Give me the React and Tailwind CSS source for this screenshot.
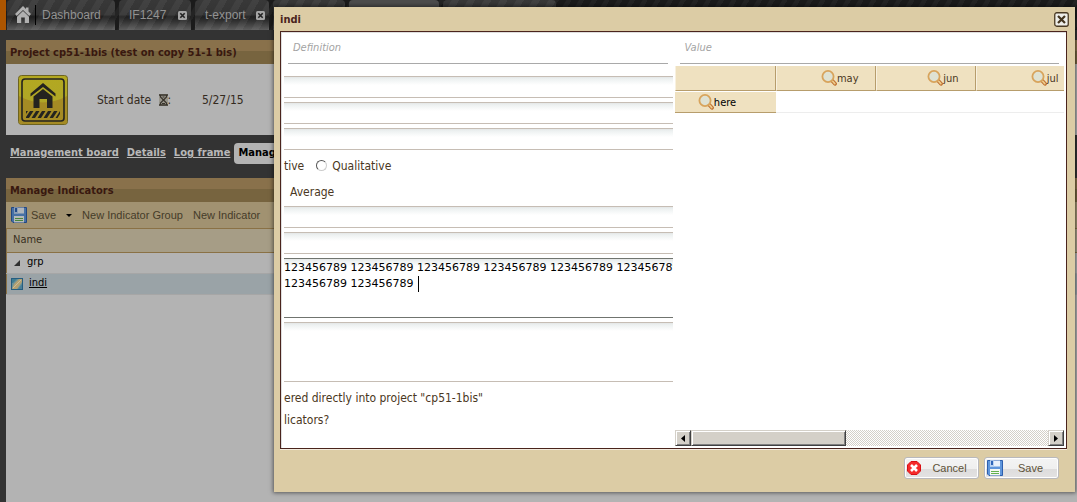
import React from "react";

const headerBg =
  "bg-[#1c1c1c] bg-[repeating-linear-gradient(120deg,#1b1b1b_0px,#1b1b1b_6px,#242424_7px,#242424_11px)]";
const tabBg =
  "bg-[repeating-linear-gradient(120deg,rgba(255,255,255,0)_0px,rgba(255,255,255,0)_7px,rgba(255,255,255,0.05)_8px,rgba(255,255,255,0.05)_14px),linear-gradient(180deg,#383838_0%,#343434_48%,#1f1f1f_56%,#333333_72%,#5c5c5c_100%)]";
const titleBg = "bg-[linear-gradient(180deg,#89714b_0%,#89714b_45%,#77643f_46%,#77643f_100%)]";
const fieldBg = "bg-[linear-gradient(180deg,#e4e6e6_0px,#edf1f1_2px,#ffffff_8px)]";

function HomeIcon() {
  return (
    <svg width="16" height="18" viewBox="0 0 16 18" fill="#b0b0b0" className="shrink-0">
      <path d="M8 0 L0 8 L1.8 10 L8 4 L14.2 10 L16 8 L13.5 5.5 V1.5 H11 V3 Z" />
      <path d="M2 10.8 L8 5 L14 10.8 V17 H9.8 V11.5 H6.2 V17 H2 Z" />
    </svg>
  );
}

function TabClose() {
  return (
    <svg width="9" height="9" viewBox="0 0 9 9">
      <rect width="9" height="9" rx="1.5" fill="#a5a5a5" />
      <path d="M2.3 2.3 L6.7 6.7 M6.7 2.3 L2.3 6.7" stroke="#222" strokeWidth="1.6" />
    </svg>
  );
}

function ProjectIcon() {
  return (
    <svg width="50" height="50" viewBox="0 0 50 50">
      <defs>
        <linearGradient id="sign" x1="0" y1="0" x2="0" y2="1">
          <stop offset="0" stopColor="#b3a820" />
          <stop offset="0.5" stopColor="#b0a726" />
          <stop offset="1" stopColor="#a08a20" />
        </linearGradient>
      </defs>
      <rect x="0.5" y="0.5" width="49" height="49" rx="3" fill="url(#sign)" stroke="#6d6320" />
      <path d="M1 21 Q25 34 49 21 V47 Q49 49 47 49 H3 Q1 49 1 47 Z" fill="#a58b24" />
      <rect x="4" y="4" width="42" height="42" rx="3" fill="none" stroke="#24231f" strokeWidth="1.6" />
      <path d="M25 8 L12.5 18.5 V21.5 L25 12 L37.5 21.5 V18.5 Z" fill="#24231f" />
      <path d="M15.5 21.5 L25 14 L34.5 21.5 V33 H29 V24 H21.5 V33 H15.5 Z" fill="#24231f" />
      <path
        d="M8 36 H10 L8 39 Z M12 36 H15.5 L11 43 H8 V42 Z M18 36 H21.5 L17 43 H13.5 Z M24 36 H27.5 L23 43 H19.5 Z M30 36 H33.5 L29 43 H25.5 Z M36 36 H39.5 L35 43 H31.5 Z M42 36 V39 L39.5 43 H37.5 Z"
        fill="#24231f"
      />
    </svg>
  );
}

function HourglassIcon() {
  return (
    <svg width="9" height="12" viewBox="0 0 9 12" fill="none" stroke="#39342c">
      <rect x="0" y="0" width="9" height="12" fill="#99968c" stroke="none" />
      <path d="M0 1 H9 M0 11 H9" strokeWidth="1.4" />
      <path d="M1.5 1 V3 L7.5 9 V11 M7.5 1 V3 L1.5 9 V11" strokeWidth="1.2" />
      <path d="M3 9.5 H6 M3.5 3 H5.5" />
    </svg>
  );
}

function DiskIcon({ dim }) {
  return (
    <svg width="16" height="16" viewBox="0 0 16 16" className={dim ? "brightness-75" : ""}>
      <path d="M0.5 0.5 H15.5 V15.5 H2 L0.5 14 Z" fill="#5f96dc" stroke="#2d5fae" />
      <rect x="3" y="0.5" width="10" height="6" fill="#e9f1fb" />
      <rect x="3" y="0.5" width="4" height="6" fill="#b9d2f2" />
      <rect x="4" y="1" width="2" height="4" fill="#2f65b8" />
      <rect x="3" y="9" width="10" height="6.5" fill="#f4f8f4" />
      <path d="M4 11.5 H12 M4 13.5 H12" stroke="#63b14e" />
    </svg>
  );
}

function IndicatorIcon() {
  return (
    <svg width="12" height="12" viewBox="0 0 12 12">
      <rect width="12" height="12" fill="#255d80" />
      <rect x="1" y="1" width="10" height="10" fill="#6c9298" />
      <path d="M1 11 L3 6 L8 1 H11 V4 L6 11 Z" fill="#b3a071" />
      <path d="M2 10 L10 2" stroke="#c9bd9a" />
      <path d="M7 11 L11 6 V11 Z" fill="#4a7f96" />
      <path d="M1 1 H6 L2 5 H1 Z" fill="#3f7d92" />
    </svg>
  );
}

function Magnifier() {
  return (
    <svg width="16" height="16" viewBox="0 0 16 16" className="shrink-0">
      <path d="M11 10.5 L14 13.8" stroke="#bf6f2f" strokeWidth="3.8" strokeLinecap="round" />
      <path d="M11.5 11 L13.8 13.6" stroke="#eecb8c" strokeWidth="1.8" strokeLinecap="round" />
      <circle cx="7" cy="6.5" r="5.6" fill="#dfe2d3" stroke="#d8a45c" strokeWidth="1.8" />
    </svg>
  );
}

function CancelIcon() {
  return (
    <svg width="14" height="14" viewBox="0 0 14 14">
      <path d="M4 0.5 H10 L13.5 4 V10 L10 13.5 H4 L0.5 10 V4 Z" fill="#f52b2b" stroke="#d80f14" />
      <path d="M4 4 L10 10 M10 4 L4 10" stroke="#fff" strokeWidth="2.6" />
    </svg>
  );
}

function Tab({ children, className = "" }) {
  return (
    <div className={`flex h-full shrink-0 items-center rounded-t-[4px] font-['Liberation_Sans',sans-serif] text-xs text-[#929292] ${tabBg} ${className}`}>
      {children}
    </div>
  );
}

function Field({ label }) {
  return (
    <input
      aria-label={label}
      className={`block h-[22px] w-full border-y border-[#c6bdb4] outline-none ${fieldBg}`}
    />
  );
}

function HeadCell({ children }) {
  return (
    <th scope="col" className="h-[25px] border-r border-b border-[#b79d6c] border-l border-l-[#f8f1e0] bg-[#efe1c0] p-0 pr-4 font-normal text-[#4a3722]">
      {children && (
        <span className="flex items-center justify-end">
          <Magnifier />
          <span className="pt-0.5">{children}</span>
        </span>
      )}
    </th>
  );
}

function SectionTitle({ children }) {
  return (
    <h3 className="mx-[5px] flex h-[31px] items-center border-b border-[#a9a9a9] px-[5px] pt-px text-[11px] font-normal text-[#a3a3a3] italic">
      {children}
    </h3>
  );
}

const scrollBtn =
  "flex h-4 w-4 shrink-0 items-center justify-center border border-t-[#d4d0c8] border-l-[#d4d0c8] border-r-[#404040] border-b-[#404040] bg-[#d4d0c8] shadow-[inset_1px_1px_0_#fff,inset_-1px_-1px_0_#808080]";
const dialogBtn =
  "flex h-[22px] w-[75px] items-center rounded-[3px] border border-[#b9b9bd] bg-[linear-gradient(180deg,#f4f4f4_0%,#efefef_55%,#dedddd_56%,#e3e2e2_100%)] pl-0.5 font-['Liberation_Sans',sans-serif] text-[11px] text-[#5d5238] shadow-[inset_0_0_0_1px_#fff]";

export default function App() {
  return (
    <div className="relative flex min-h-screen flex-col overflow-hidden bg-[#333333] font-['DejaVu_Sans_Condensed','DejaVu_Sans',sans-serif] text-xs text-[#332a20]">
      <header className={`flex h-[30px] ${headerBg}`}>
        <div className="w-[6px] shrink-0 bg-[#ac5500]" />
        <nav className="flex gap-1 pl-px" aria-label="Open tabs">
          <Tab className="w-[108px] pl-2">
            <HomeIcon />
            <span className="mr-1.5 ml-1 h-5 w-px bg-black" />
            <a href="#dashboard">Dashboard</a>
          </Tab>
          <Tab className="w-[72px] justify-between pr-1 pl-2.5">
            <a href="#if1247">IF1247</a>
            <button type="button" aria-label="Close IF1247"><TabClose /></button>
          </Tab>
          <Tab className="w-[74px] justify-between pr-1 pl-2.5">
            <a href="#t-export">t-export</a>
            <button type="button" aria-label="Close t-export"><TabClose /></button>
          </Tab>
          <Tab className="w-[72px]" />
          <div className="h-full w-[90px] rounded-t-[4px] bg-[#4c4c4c]" />
          <Tab className="w-[113px]" />
        </nav>
      </header>

      <main className="flex grow flex-col pt-2.5 pl-1.5">
        <section>
          <h1 className={`flex h-6 items-center pt-0.5 pl-1 text-[11px] font-bold text-[#39180f] ${titleBg}`}>
            Project cp51-1bis (test on copy 51-1 bis)
          </h1>
          <div className="flex h-[71px] items-center bg-[#b3b3b3] pl-3">
            <ProjectIcon />
            <span className="ml-[29px] flex w-[105px] items-center">
              Start date&nbsp;
              <span className="ml-1"><HourglassIcon /></span>:
            </span>
            <span>5/27/15</span>
          </div>
        </section>

        <nav className="flex h-[43px] items-center pb-1.5 pl-1 text-[11px] font-bold text-[#b8b8b8]" aria-label="Project">
          <a href="#board" className="mr-2 underline">Management board</a>
          <a href="#details" className="mr-2 underline">Details</a>
          <a href="#logframe" className="underline">Log frame</a>
          <a href="#indicators" className="ml-1 flex h-[21px] items-center rounded-[4px] bg-[#b3b3b3] px-1 text-black">Manage</a>
        </nav>

        <section className="flex grow flex-col bg-[#b3b3b3]">
          <h2 className={`flex h-6 items-center pt-0.5 pl-1 text-[11px] font-bold text-[#39180f] ${titleBg}`}>
            Manage Indicators
          </h2>
          <div className="flex h-[27px] items-center border-b border-[#8a7145] bg-[#a19271] pl-[5px] font-['Liberation_Sans',sans-serif] text-[11px] text-[#453c29]">
            <button type="button" className="flex items-center gap-1">
              <DiskIcon dim />
              Save
              <span className="ml-1.5 h-0 w-0 border-x-[3px] border-t-[3px] border-x-transparent border-t-black" />
            </button>
            <button type="button" className="ml-2.5">New Indicator Group</button>
            <button type="button" className="ml-2.5">New Indicator</button>
          </div>
          <table className="w-full border-l border-[#8a7145] text-left text-[11px]">
            <thead>
              <tr className="h-[23px] border-b border-[#8a7145] bg-[#a69d86]">
                <th scope="col" className="pl-1.5 font-normal text-[#39301f]">Name</th>
              </tr>
            </thead>
            <tbody className="text-black">
              <tr className="h-[21px] border-b border-[#a6a6a6]">
                <td>
                  <span className="flex items-center gap-[7px] pl-[7px]">
                    <svg width="6" height="6" viewBox="0 0 6 6"><path d="M6 0 V6 H0 Z" fill="#303030" /></svg>
                    grp
                  </span>
                </td>
              </tr>
              <tr className="h-[21px] border-b border-[#a6a6a6] bg-[#9aa3a7]">
                <td>
                  <span className="flex items-center gap-1.5 pl-1">
                    <IndicatorIcon />
                    <a href="#indi" className="underline">indi</a>
                  </span>
                </td>
              </tr>
            </tbody>
          </table>
        </section>
      </main>

      <div
        role="dialog"
        aria-labelledby="dialog-title"
        className="absolute top-[7px] right-0.5 left-[274px] border border-[#dccca5] bg-[#dccca5] px-[5px] pb-3 shadow-[0_0_4px_1px_rgba(0,0,0,0.5)]"
      >
        <div className="flex h-[23px] items-center justify-between">
          <h2 id="dialog-title" className="pt-0.5 text-[11px] font-bold text-[#4a241d]">indi</h2>
          <button type="button" aria-label="Close">
            <svg width="15" height="15" viewBox="0 0 15 15">
              <rect x="0.75" y="0.75" width="13.5" height="13.5" rx="2" fill="#eeeeea" stroke="#4a3a24" strokeWidth="1.3" />
              <path d="M4 4 L11 11 M11 4 L4 11" stroke="#43341f" strokeWidth="2.2" />
            </svg>
          </button>
        </div>

        <div className="mr-0.5 flex h-[418px] gap-0.5 border border-[#4a241d] bg-white px-0.5 pt-px pb-0.5 shadow-[0_1px_0_#f4ebdd,inset_1px_1px_0_#dedede]">
          <div className="min-w-0 flex-1 overflow-hidden text-[#4a3722]">
            <SectionTitle>Definition</SectionTitle>
            <div className="flex flex-col gap-1 pt-3 pl-px">
              <Field label="Code" />
              <Field label="Name" />
              <Field label="Description" />
              <div className="flex h-[22px] items-center pt-px">
                <span>tive</span>
                <label className="ml-3 flex items-center gap-[5px]">
                  <input
                    type="radio"
                    name="kind"
                    className="h-[11px] w-[11px] appearance-none rounded-full border border-t-[#555] border-l-[#555] border-r-[#ccc] border-b-[#ccc] bg-white"
                  />
                  Qualitative
                </label>
              </div>
              <div className="flex h-[22px] items-center pt-px pl-1.5">Average</div>
              <Field label="Units" />
              <Field label="Objective" />
              <div className="relative">
                <textarea
                  aria-label="Source of verification"
                  wrap="off"
                  className={`block h-[60px] w-full resize-none overflow-hidden border-y border-[#70746f] pt-px font-['DejaVu_Sans',sans-serif] text-[11px] leading-4 whitespace-pre text-black outline-none ${fieldBg}`}
                  defaultValue={
                    "123456789 123456789 123456789 123456789 123456789 123456789\n123456789 123456789 "
                  }
                />
                <span className="absolute top-[18px] left-[134px] h-4 w-px bg-black" />
              </div>
              <textarea
                aria-label="Comments"
                className={`block h-[60px] w-full resize-none border-y border-[#c6bdb4] outline-none ${fieldBg}`}
              />
              <p className="flex h-[22px] items-center pt-px whitespace-nowrap">ered directly into project "cp51-1bis"</p>
              <p>licators?</p>
            </div>
          </div>

          <div className="flex min-w-0 flex-1 flex-col">
            <SectionTitle>Value</SectionTitle>
            <div className="mt-0.5 grow overflow-hidden">
              <table className="w-[401px] table-fixed border-separate border-spacing-0 text-[11px]">
                <colgroup>
                  <col className="w-[101px]" />
                  <col />
                  <col />
                  <col />
                </colgroup>
                <thead>
                  <tr>
                    <HeadCell />
                    <HeadCell>may</HeadCell>
                    <HeadCell>jun</HeadCell>
                    <HeadCell>jul</HeadCell>
                  </tr>
                </thead>
                <tbody>
                  <tr>
                    <th scope="row" className="h-[22px] border-t border-b border-t-white border-b-[#b79d6c] bg-[#efe1c0] p-0 pr-4 font-normal text-black">
                      <span className="flex items-center justify-center">
                        <Magnifier />
                        <span className="pt-0.5">here</span>
                      </span>
                    </th>
                    <td className="border-b border-[#ededed]" />
                    <td className="border-b border-[#ededed]" />
                    <td className="border-b border-[#ededed]" />
                  </tr>
                </tbody>
              </table>
            </div>
            <div className="flex h-4 bg-[repeating-conic-gradient(#d4d0c8_0_25%,#ffffff_0_50%)] bg-[length:2px_2px]">
              <button type="button" aria-label="Scroll left" className={scrollBtn}>
                <svg width="4" height="7" viewBox="0 0 4 7"><path d="M4 0 V7 L0 3.5 Z" /></svg>
              </button>
              <div className="h-4 w-2/5 border border-t-[#d4d0c8] border-l-[#d4d0c8] border-r-[#404040] border-b-[#404040] bg-[#d4d0c8] shadow-[inset_1px_1px_0_#fff,inset_-1px_-1px_0_#808080]" />
              <button type="button" aria-label="Scroll right" className={`ml-auto ${scrollBtn}`}>
                <svg width="4" height="7" viewBox="0 0 4 7"><path d="M0 0 V7 L4 3.5 Z" /></svg>
              </button>
            </div>
          </div>
        </div>

        <div className="flex justify-end gap-[5px] pt-2 pr-2.5">
          <button type="button" className={dialogBtn}>
            <CancelIcon />
            <span className="grow text-center">Cancel</span>
          </button>
          <button type="button" className={dialogBtn}>
            <DiskIcon />
            <span className="grow text-center">Save</span>
          </button>
        </div>
      </div>
    </div>
  );
}
